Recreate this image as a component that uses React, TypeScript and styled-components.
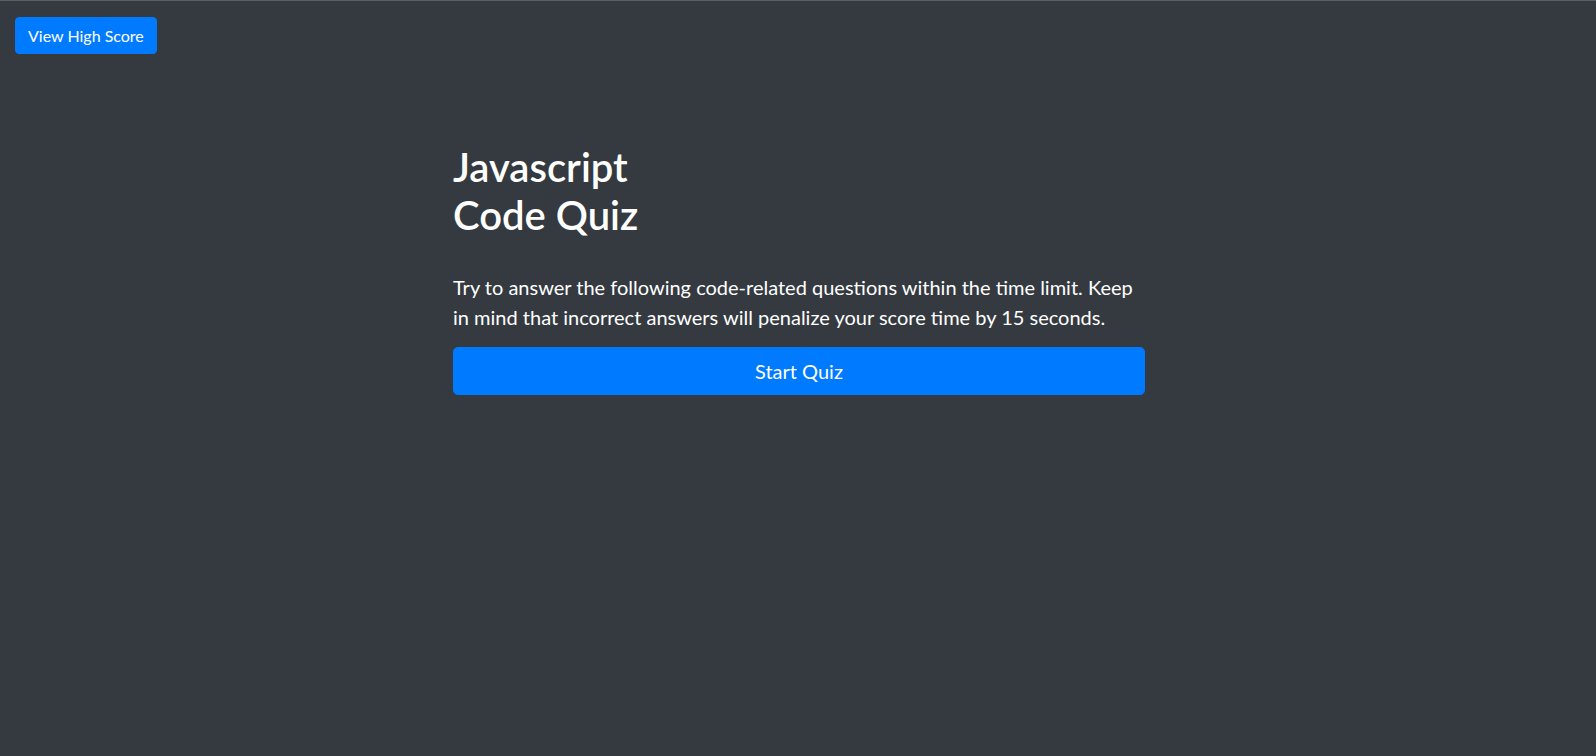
import styled, { createGlobalStyle } from "styled-components";

const Global = createGlobalStyle`
  html, body {
    margin: 0;
    min-height: 100%;
    background: #343a40;
  }
  body {
    min-height: 756px;
    border-top: 1px solid #5b5f64;
    box-sizing: border-box;
    font-family: "Lato", "Liberation Sans", sans-serif;
    color: #fff;
  }
`;

const Header = styled.header`
  display: flex;
  padding: 16px 15px 0;
`;

const Button = styled.button<{ $large?: boolean }>`
  display: block;
  border: 1px solid #007bff;
  background: #007bff;
  color: #fff;
  font-family: inherit;
  font-size: ${(p) => (p.$large ? "20px" : "16px")};
  line-height: ${(p) => (p.$large ? "30px" : "23px")};
  padding: ${(p) => (p.$large ? "8px 16px" : "6px 12px")};
  border-radius: ${(p) => (p.$large ? "4.8px" : "4px")};
  width: ${(p) => (p.$large ? "100%" : "auto")};
  cursor: pointer;
`;

const Main = styled.main`
  box-sizing: border-box;
  width: 694px;
  padding-left: 2px;
  margin: 89px auto 0;
`;

const Title = styled.h1`
  margin: 0 0 33px;
  font-size: 40px;
  line-height: 48px;
  font-weight: 600;
`;

const Intro = styled.p`
  margin: 0 0 15px;
  font-size: 20px;
  line-height: 30px;
`;

export default function App() {
  return (
    <>
      <Global />
      <Header>
        <Button>View High Score</Button>
      </Header>
      <Main>
        <Title>
          Javascript
          <br />
          Code Quiz
        </Title>
        <Intro>
          Try to answer the following code-related questions within the time limit. Keep in mind
          that incorrect answers will penalize your score time by 15 seconds.
        </Intro>
        <Button $large>Start Quiz</Button>
      </Main>
    </>
  );
}
